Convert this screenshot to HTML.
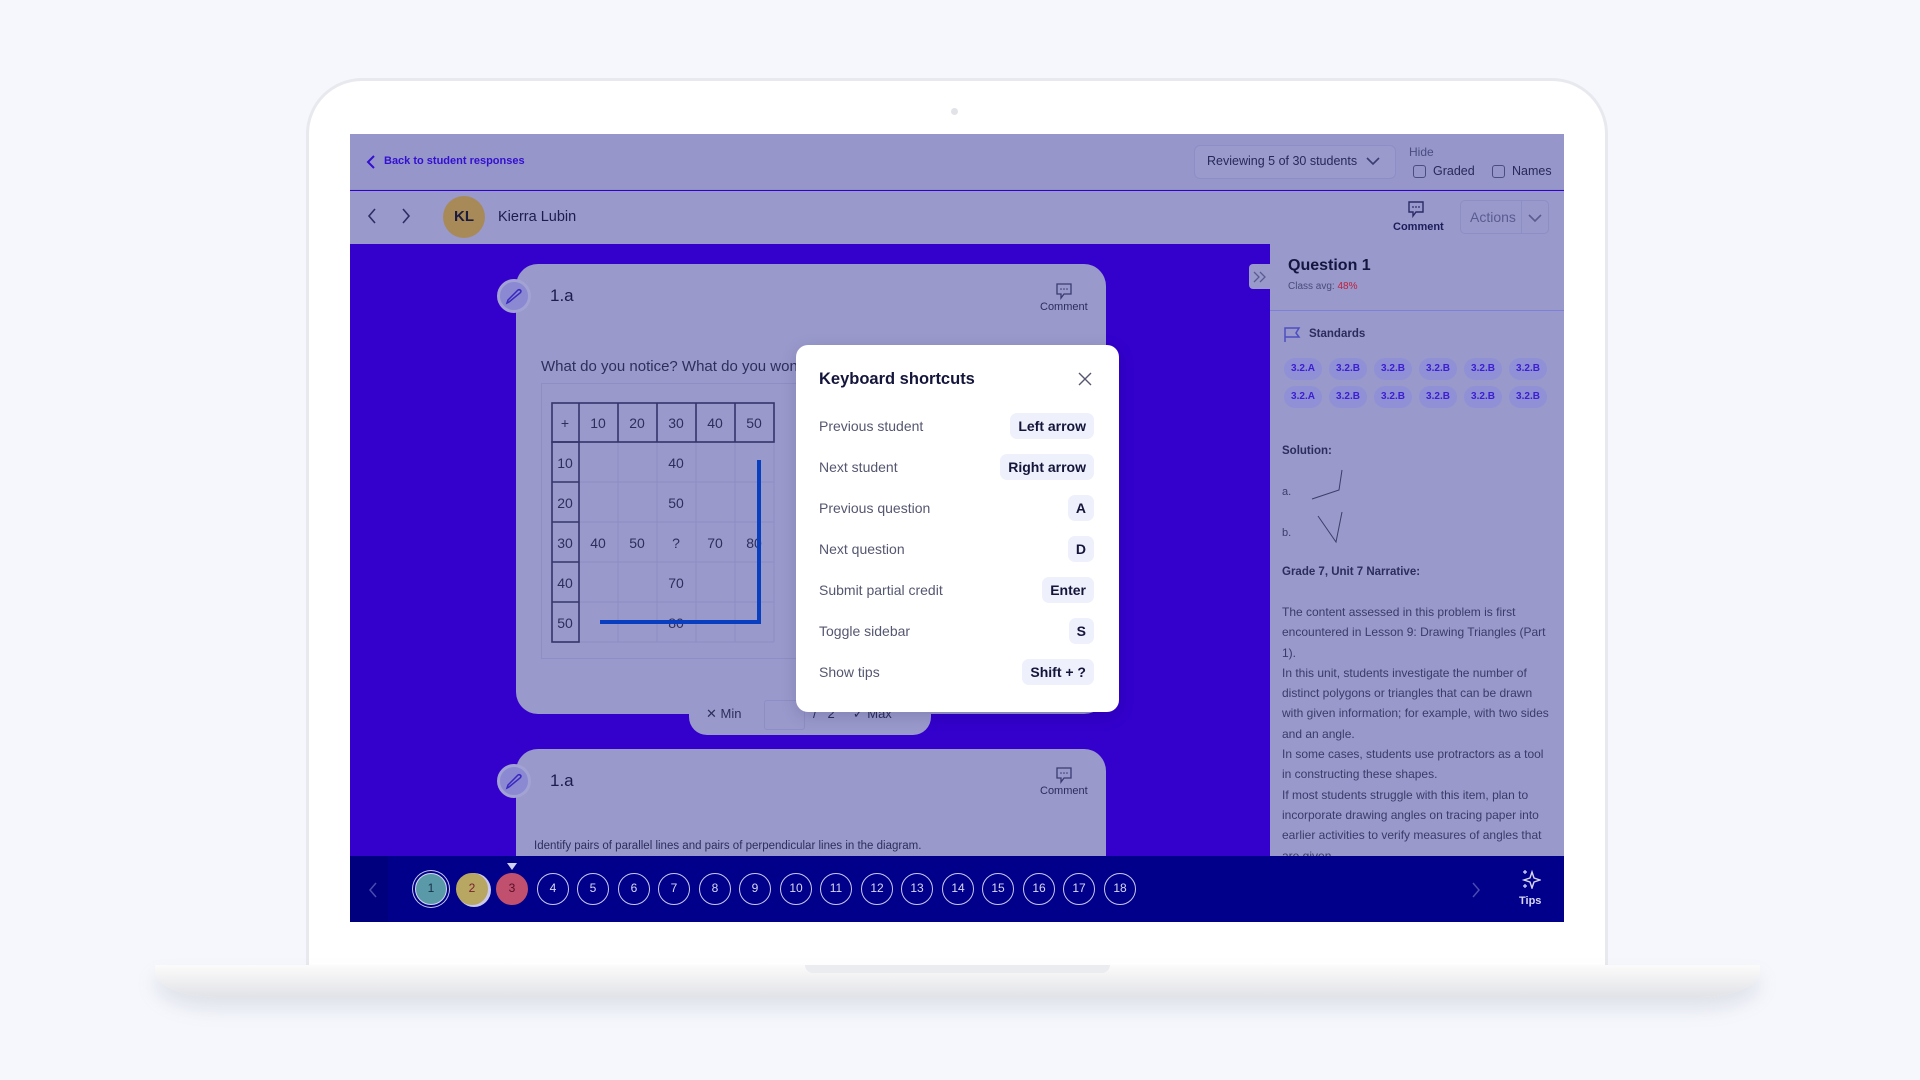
<!DOCTYPE html>
<html><head><meta charset="utf-8"><style>
*{box-sizing:border-box;margin:0;padding:0}
body{width:1920px;height:1080px;background:#f5f7fc;font-family:"Liberation Sans",sans-serif;position:relative;overflow:hidden;color:#25265a}
.a{position:absolute}
.lid{left:306px;top:78px;width:1302px;height:895px;background:#fff;border:3px solid #e8e9ee;border-radius:56px 56px 0 0;border-bottom:none}
.base{left:155px;top:965px;width:1605px;height:32px;background:linear-gradient(#fbfbfb,#e2e3e7);border-radius:0 0 60px 60px/0 0 26px 26px;box-shadow:0 12px 18px rgba(150,155,175,.22)}
.notch{left:805px;top:965px;width:305px;height:8px;background:#ebecf0;border-radius:0 0 12px 12px}
.screen{left:350px;top:134px;width:1214px;height:788px;background:#3300cc;overflow:hidden}
.t{white-space:nowrap}
.chip{position:absolute;background:#eef0fb;border-radius:7px;height:26px;line-height:26px;padding:0 8px;font-weight:bold;font-size:14px;color:#14153a;right:25px}
.lab{position:absolute;left:23px;font-size:14px;color:#555770}
.std{position:absolute;width:38px;height:22px;border-radius:11px;background:#9090d6;color:#3b1fd0;font-size:10px;font-weight:bold;text-align:center;line-height:22px}
.c{position:absolute;width:32px;height:32px;border-radius:50%;border:1.5px solid #c9c9ee;color:#d8d8f5;font-size:12px;text-align:center;line-height:29px;top:739px}
</style></head><body>
<div class="a lid"></div>
<div class="a" style="left:951px;top:108px;width:7px;height:7px;border-radius:50%;background:#e2e3e8"></div>
<div class="a base"></div>
<div class="a notch"></div>

<div class="a screen">
 <div class="a" style="left:0;top:0;width:1214px;height:56px;background:#9696ca;border-bottom:1px solid #9090c8"></div>
 <svg class="a" style="left:16px;top:21px" width="10" height="14"><path d="M8 1 L2 7 L8 13" stroke="#3310d0" stroke-width="2" fill="none"/></svg>
 <div class="a t" style="left:34px;top:21px;font-size:11px;font-weight:bold;color:#3310d0">Back to student responses</div>
 <div class="a" style="left:844px;top:11px;width:202px;height:34px;border:1px solid #8e8ec6;border-radius:6px;background:#9a9acd"></div>
 <div class="a t" style="left:857px;top:20px;font-size:12.5px;color:#28295a">Reviewing 5 of 30 students</div>
 <svg class="a" style="left:1016px;top:22px" width="14" height="10"><path d="M1 2 L7 8 L13 2" stroke="#3a3b70" stroke-width="1.6" fill="none"/></svg>
 <div class="a t" style="left:1059px;top:11px;font-size:12px;color:#4a4c82">Hide</div>
 <div class="a" style="left:1063px;top:31px;width:13px;height:13px;border:1.3px solid #4a4c82;border-radius:3px"></div>
 <div class="a t" style="left:1083px;top:30px;font-size:12.5px;color:#28295a">Graded</div>
 <div class="a" style="left:1142px;top:31px;width:13px;height:13px;border:1.3px solid #4a4c82;border-radius:3px"></div>
 <div class="a t" style="left:1162px;top:30px;font-size:12.5px;color:#28295a">Names</div>
 <div class="a" style="left:0;top:57px;width:1214px;height:53px;background:#9999cc"></div>
 <svg class="a" style="left:17px;top:74px" width="10" height="16"><path d="M8 1 L2 8 L8 15" stroke="#2d2e64" stroke-width="1.6" fill="none"/></svg>
 <svg class="a" style="left:51px;top:74px" width="10" height="16"><path d="M2 1 L8 8 L2 15" stroke="#2d2e64" stroke-width="1.6" fill="none"/></svg>
 <div class="a" style="left:93px;top:62px;width:42px;height:42px;border-radius:50%;background:#a88a58;color:#1b1b40;font-weight:bold;font-size:15px;text-align:center;line-height:42px">KL</div>
 <div class="a t" style="left:148px;top:75px;font-size:14.5px;color:#1c1d4c">Kierra Lubin</div>
 <svg class="a" style="left:1057px;top:66px" width="18" height="18"><path d="M2 2 H16 V12 H9 L6 16 V12 H2 Z" stroke="#2a2b66" stroke-width="1.4" fill="none"/><circle cx="6" cy="7" r=".9" fill="#2a2b66"/><circle cx="9" cy="7" r=".9" fill="#2a2b66"/><circle cx="12" cy="7" r=".9" fill="#2a2b66"/></svg>
 <div class="a t" style="left:1043px;top:87px;font-size:11px;font-weight:bold;color:#1c1d58">Comment</div>
 <div class="a" style="left:1110px;top:66px;width:89px;height:34px;border:1px solid #8e8ec6;border-radius:5px"></div>
 <div class="a" style="left:1171px;top:66px;width:1px;height:34px;background:#8e8ec6"></div>
 <div class="a t" style="left:1120px;top:75px;font-size:14px;color:#5a5c90">Actions</div>
 <svg class="a" style="left:1178px;top:79px" width="14" height="10"><path d="M1 2 L7 8 L13 2" stroke="#5a5c90" stroke-width="1.6" fill="none"/></svg>

 <div class="a" style="left:920px;top:110px;width:294px;height:612px;background:#9999cc;overflow:hidden">
  <div class="a t" style="left:18px;top:13px;font-size:16px;font-weight:bold;color:#15163f">Question 1</div>
  <div class="a t" style="left:18px;top:37px;font-size:10px;color:#4a4c78">Class avg: <span style="color:#c0203a">48%</span></div>
  <div class="a" style="left:0;top:66px;width:294px;height:1px;background:#7d7fd8"></div>
  <svg class="a" style="left:13px;top:82px" width="18" height="17"><path d="M2 16 V2 H16 L13 7 L16 11 H2" stroke="#4e4fbf" stroke-width="1.5" fill="none"/></svg>
  <div class="a t" style="left:39px;top:84px;font-size:11.5px;font-weight:bold;color:#2c2d5c">Standards</div>
  <div class="std" style="left:14px;top:114px">3.2.A</div><div class="std" style="left:59px;top:114px">3.2.B</div><div class="std" style="left:104px;top:114px">3.2.B</div><div class="std" style="left:149px;top:114px">3.2.B</div><div class="std" style="left:194px;top:114px">3.2.B</div><div class="std" style="left:239px;top:114px">3.2.B</div>
  <div class="std" style="left:14px;top:142px">3.2.A</div><div class="std" style="left:59px;top:142px">3.2.B</div><div class="std" style="left:104px;top:142px">3.2.B</div><div class="std" style="left:149px;top:142px">3.2.B</div><div class="std" style="left:194px;top:142px">3.2.B</div><div class="std" style="left:239px;top:142px">3.2.B</div>
  <div class="a t" style="left:12px;top:201px;font-size:11.5px;font-weight:bold;color:#2c2d5c">Solution:</div>
  <div class="a t" style="left:12px;top:242px;font-size:11px;color:#3c3d68">a.</div>
  <svg class="a" style="left:40px;top:224px" width="40" height="36"><path d="M32 2 L29 22 L2 31" stroke="#3c3d68" stroke-width="1" fill="none"/></svg>
  <div class="a t" style="left:12px;top:283px;font-size:11px;color:#3c3d68">b.</div>
  <svg class="a" style="left:40px;top:264px" width="40" height="36"><path d="M8 8 L26 34 L32 4" stroke="#3c3d68" stroke-width="1" fill="none"/></svg>
  <div class="a t" style="left:12px;top:322px;font-size:11.5px;font-weight:bold;color:#2c2d5c">Grade 7, Unit 7 Narrative:</div>
  <div class="a" style="left:12px;top:358px;width:270px;font-size:12px;line-height:20.3px;color:#3a3b68">The content assessed in this problem is first encountered in Lesson 9: Drawing Triangles (Part 1).<br>In this unit, students investigate the number of distinct polygons or triangles that can be drawn with given information; for example, with two sides and an angle.<br>In some cases, students use protractors as a tool in constructing these shapes.<br>If most students struggle with this item, plan to incorporate drawing angles on tracing paper into earlier activities to verify measures of angles that are given.</div>
 </div>
 <div class="a" style="left:899px;top:130px;width:21px;height:25px;background:#9999cc;border-radius:4px 0 0 4px"></div>
 <svg class="a" style="left:902px;top:137px" width="16" height="12"><path d="M2 1 L7 6 L2 11 M8 1 L13 6 L8 11" stroke="#5a5c90" stroke-width="1.3" fill="none"/></svg>

 <div class="a" style="left:166px;top:130px;width:590px;height:450px;background:#9999cc;border-radius:22px"></div>
 <div class="a" style="left:147px;top:145px;width:34px;height:34px;border-radius:50%;background:#8a89d2;border:3px solid #a2a2d4"></div>
 <svg class="a" style="left:155px;top:153px" width="18" height="18"><path d="M4 15 L2 16 L3 13 L13 3 Q15 2 16 4 Q16 5 15 6 Z" stroke="#3a28c0" stroke-width="1.5" fill="none"/></svg>
 <div class="a t" style="left:200px;top:152px;font-size:17px;color:#1c1d4c">1.a</div>
 <svg class="a" style="left:705px;top:148px" width="18" height="18"><path d="M2 2 H16 V12 H9 L6 16 V12 H2 Z" stroke="#3a3b70" stroke-width="1.3" fill="none"/><circle cx="6" cy="7" r=".8" fill="#3a3b70"/><circle cx="9" cy="7" r=".8" fill="#3a3b70"/><circle cx="12" cy="7" r=".8" fill="#3a3b70"/></svg>
 <div class="a t" style="left:690px;top:167px;font-size:11px;color:#2c2d5c">Comment</div>
 <div class="a t" style="left:191px;top:224px;font-size:15px;color:#2d2e5a">What do you notice? What do you wonder?</div>
 <div class="a" style="left:191px;top:249px;width:280px;height:276px;border:1px solid #8e8ec6"></div>
 <svg class="a" style="left:201px;top:268px" width="232" height="248" font-family="Liberation Sans" font-size="14" fill="#2d2e5a">
  <g stroke="#8d8dc4" stroke-width="1">
   <line x1="67" y1="40" x2="67" y2="240"/><line x1="106" y1="40" x2="106" y2="240"/><line x1="145" y1="40" x2="145" y2="240"/><line x1="184" y1="40" x2="184" y2="240"/><line x1="223" y1="40" x2="223" y2="240"/>
   <line x1="28" y1="80" x2="223" y2="80"/><line x1="28" y1="120" x2="223" y2="120"/><line x1="28" y1="160" x2="223" y2="160"/><line x1="28" y1="200" x2="223" y2="200"/><line x1="28" y1="240" x2="223" y2="240"/>
  </g>
  <g stroke="#34356a" stroke-width="1.6" fill="none">
   <rect x="1" y="1" width="222" height="39"/><rect x="1" y="40" width="27" height="200"/>
   <line x1="28" y1="1" x2="28" y2="40"/><line x1="67" y1="1" x2="67" y2="40"/><line x1="106" y1="1" x2="106" y2="40"/><line x1="145" y1="1" x2="145" y2="40"/><line x1="184" y1="1" x2="184" y2="40"/>
   <line x1="1" y1="80" x2="28" y2="80"/><line x1="1" y1="120" x2="28" y2="120"/><line x1="1" y1="160" x2="28" y2="160"/><line x1="1" y1="200" x2="28" y2="200"/>
  </g>
  <g text-anchor="middle">
   <text x="14" y="26">+</text><text x="47" y="26">10</text><text x="86" y="26">20</text><text x="125" y="26">30</text><text x="164" y="26">40</text><text x="203" y="26">50</text>
   <text x="14" y="66">10</text><text x="14" y="106">20</text><text x="14" y="146">30</text><text x="14" y="186">40</text><text x="14" y="226">50</text>
   <text x="125" y="66">40</text><text x="125" y="106">50</text><text x="47" y="146">40</text><text x="86" y="146">50</text><text x="125" y="146">?</text><text x="164" y="146">70</text><text x="203" y="146">80</text><text x="125" y="186">70</text><text x="125" y="226">80</text>
  </g>
  <path d="M49 220 H208 V58" stroke="#0a3ec0" stroke-width="4" fill="none"/>
 </svg>
 <div class="a" style="left:339px;top:562px;width:242px;height:39px;background:#9999cc;border-radius:0 0 18px 18px"></div>
 <div class="a t" style="left:356px;top:572px;font-size:13px;color:#2d2e5a">✕ Min</div>
 <div class="a" style="left:414px;top:566px;width:41px;height:30px;border:1px solid #8e8ec6;border-radius:3px"></div>
 <div class="a t" style="left:463px;top:572px;font-size:13px;color:#2d2e5a">/ &nbsp; 2 &nbsp; &nbsp; ✓ Max</div>

 <div class="a" style="left:166px;top:615px;width:590px;height:200px;background:#9999cc;border-radius:22px"></div>
 <div class="a" style="left:147px;top:630px;width:34px;height:34px;border-radius:50%;background:#8a89d2;border:3px solid #a2a2d4"></div>
 <svg class="a" style="left:155px;top:638px" width="18" height="18"><path d="M4 15 L2 16 L3 13 L13 3 Q15 2 16 4 Q16 5 15 6 Z" stroke="#3a28c0" stroke-width="1.5" fill="none"/></svg>
 <div class="a t" style="left:200px;top:637px;font-size:17px;color:#1c1d4c">1.a</div>
 <svg class="a" style="left:705px;top:632px" width="18" height="18"><path d="M2 2 H16 V12 H9 L6 16 V12 H2 Z" stroke="#3a3b70" stroke-width="1.3" fill="none"/><circle cx="6" cy="7" r=".8" fill="#3a3b70"/><circle cx="9" cy="7" r=".8" fill="#3a3b70"/><circle cx="12" cy="7" r=".8" fill="#3a3b70"/></svg>
 <div class="a t" style="left:690px;top:651px;font-size:11px;color:#2c2d5c">Comment</div>
 <div class="a t" style="left:184px;top:706px;font-size:11.5px;color:#2d2e5a">Identify pairs of parallel lines and pairs of perpendicular lines in the diagram.</div>

 <div class="a" style="left:0;top:722px;width:1214px;height:66px;background:#01008a"></div>
 <div class="a" style="left:0;top:722px;width:38px;height:66px;background:#00007e"></div>
 <svg class="a" style="left:18px;top:748px" width="10" height="16"><path d="M8 1 L2 8 L8 15" stroke="#4a4ab0" stroke-width="1.5" fill="none"/></svg>
 <svg class="a" style="left:1121px;top:748px" width="10" height="16"><path d="M2 1 L8 8 L2 15" stroke="#4a4ab0" stroke-width="1.5" fill="none"/></svg>
 <div class="c" style="left:65px;background:#5a9aa8;color:#17304a;border-color:#d6d6f2;box-shadow:0 0 0 2px #01008a,0 0 0 3px #c9c9ee">1</div>
 <div class="c" style="left:106px;background:#b8a763;color:#7a2030;border-color:#b8a763;box-shadow:2px 1px 0 1px #c9c9ee">2</div>
 <div class="c" style="left:146px;background:#c0506e;color:#5a0e24;border-color:#c0506e">3</div>
 <svg class="a" style="left:157px;top:729px" width="10" height="7"><path d="M0 0 H10 L5 7 Z" fill="#d0d0f0"/></svg>
 <div class="c" style="left:187px">4</div><div class="c" style="left:227px">5</div><div class="c" style="left:268px">6</div><div class="c" style="left:308px">7</div><div class="c" style="left:349px">8</div><div class="c" style="left:389px">9</div><div class="c" style="left:430px">10</div><div class="c" style="left:470px">11</div><div class="c" style="left:511px">12</div><div class="c" style="left:551px">13</div><div class="c" style="left:592px">14</div><div class="c" style="left:632px">15</div><div class="c" style="left:673px">16</div><div class="c" style="left:713px">17</div><div class="c" style="left:754px">18</div>
 <svg class="a" style="left:1171px;top:735px" width="20" height="20"><path d="M11 3 L13 9 L19 11 L13 13 L11 19 L9 13 L3 11 L9 9 Z" stroke="#d8d8f5" stroke-width="1.4" fill="none"/><path d="M4 1 V5 M2 3 H6 M4 15 V19 M2 17 H6" stroke="#d8d8f5" stroke-width="1.2"/></svg>
 <div class="a t" style="left:1169px;top:761px;font-size:11px;font-weight:bold;color:#d8d8f5">Tips</div>

 <div class="a" style="left:446px;top:211px;width:323px;height:367px;background:#fff;border-radius:12px;box-shadow:0 4px 16px rgba(0,0,40,.15)">
  <div class="a t" style="left:23px;top:25px;font-size:16.5px;font-weight:bold;color:#14153a">Keyboard shortcuts</div>
  <svg class="a" style="left:282px;top:27px" width="14" height="14"><path d="M1 1 L13 13 M13 1 L1 13" stroke="#555770" stroke-width="1.4"/></svg>
  <div class="lab" style="top:73px">Previous student</div><div class="chip" style="top:68px">Left arrow</div>
  <div class="lab" style="top:114px">Next student</div><div class="chip" style="top:109px">Right arrow</div>
  <div class="lab" style="top:155px">Previous question</div><div class="chip" style="top:150px">A</div>
  <div class="lab" style="top:196px">Next question</div><div class="chip" style="top:191px">D</div>
  <div class="lab" style="top:237px">Submit partial credit</div><div class="chip" style="top:232px">Enter</div>
  <div class="lab" style="top:278px">Toggle sidebar</div><div class="chip" style="top:273px">S</div>
  <div class="lab" style="top:319px">Show tips</div><div class="chip" style="top:314px">Shift + ?</div>
 </div>
</div>
</body></html>
